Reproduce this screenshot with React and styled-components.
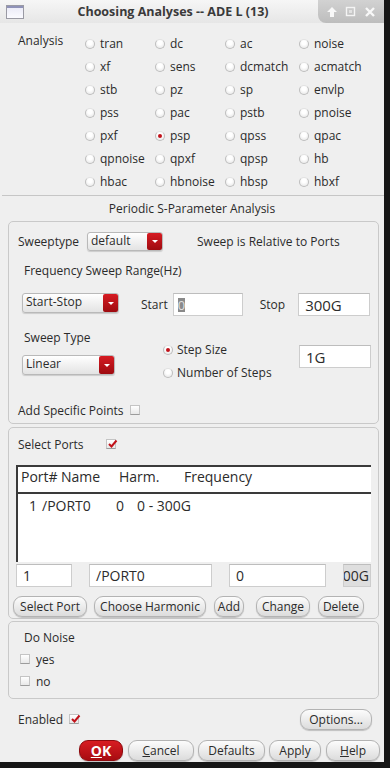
import React from "react";
import styled, { createGlobalStyle } from "styled-components";

const GlobalStyle = createGlobalStyle`
  html, body {
    margin: 0;
    padding: 0;
    background: #161616;
  }
  body {
    font-family: "Open Sans", "Noto Sans", sans-serif;
    font-size: 12px;
    color: #2b2b2b;
  }
`;

// window frame
const Window = styled.div`
  width: 384px;
  height: 762px;
  background: #efefef;
  display: flex;
  flex-direction: column;
  overflow: hidden;
`;

const TitleBar = styled.div`
  height: 23px;
  display: flex;
  align-items: center;
  background: linear-gradient(#f6f6f6, #e6e6e6);
  flex-shrink: 0;
`;

const WinIcon = styled.div`
  width: 16px;
  height: 12px;
  margin-left: 6px;
  border: 1px solid #9a9aa4;
  background: linear-gradient(#e9e9f6, #fbfbff);
  box-shadow: inset 0 2px 0 #8f92b8;
`;

const TitleText = styled.div`
  flex: 1;
  text-align: center;
  font-weight: bold;
  font-size: 12.5px;
  color: #3a3a3a;
  padding-left: 4px;
`;

const TitleButtons = styled.div`
  width: 66px;
  height: 23px;
  display: flex;
  align-items: center;
  justify-content: space-around;
  padding: 0 4px;
  box-sizing: border-box;
  background: linear-gradient(#d2d2d2, #bdbdbd);
  border-bottom-left-radius: 8px;
`;

// analysis grid
const AnalysisSection = styled.div`
  display: flex;
  padding: 9px 0 0 18px;
`;

const SideLabel = styled.div`
  width: ${(p) => p.w || 67}px;
  height: ${(p) => p.h || 23}px;
  line-height: ${(p) => (p.h ? p.h + 1 : 18)}px;
  flex-shrink: 0;
`;

const RadioGrid = styled.div`
  display: grid;
  grid-template-columns: 70px 70px 74px 70px;
  grid-auto-rows: 23px;
`;

const Option = styled.label`
  display: flex;
  align-items: center;
  gap: 5px;
  white-space: nowrap;
  font-size: 12px;
`;

const RadioDot = styled.span`
  width: 10px;
  height: 10px;
  border-radius: 50%;
  flex-shrink: 0;
  box-sizing: border-box;
  border: 1px solid #bdbdbd;
  border-top-color: #e3e3e3;
  background: radial-gradient(circle at 50% 35%, #ffffff 30%, #e2e2e2 100%);
  position: relative;
  &::after {
    content: "";
    display: ${(p) => (p.checked ? "block" : "none")};
    position: absolute;
    left: 2px;
    top: 2px;
    width: 4px;
    height: 4px;
    border-radius: 50%;
    background: #c1121a;
  }
`;

const Separator = styled.div`
  height: 1px;
  background: #c6c6c6;
  margin: 2px 0 0 2px;
`;

const Heading = styled.div`
  height: 25px;
  line-height: 26px;
  text-align: center;
  font-size: 12px;
`;

const Frame = styled.div`
  margin-left: 8px;
  width: 371px;
  height: ${(p) => p.h}px;
  margin-top: ${(p) => p.mt || 0}px;
  box-sizing: border-box;
  border: 1px solid #c9c9c9;
  border-radius: 5px;
  padding: ${(p) => p.pt || 0}px 0 0 ${(p) => (p.pl === undefined ? 9 : p.pl)}px;
  flex-shrink: 0;
`;

const Row = styled.div`
  display: flex;
  align-items: center;
  height: ${(p) => p.h || 18}px;
  margin-top: ${(p) => p.mt || 0}px;
  padding-left: ${(p) => p.pl || 0}px;
`;

const Text = styled.span`
  margin-left: ${(p) => p.ml || 0}px;
  margin-top: ${(p) => p.mt || 0}px;
  font-size: ${(p) => p.size || 12}px;
  white-space: nowrap;
`;

const Select = styled.div`
  width: ${(p) => p.w}px;
  height: ${(p) => p.h || 19}px;
  margin-left: ${(p) => p.ml || 0}px;
  box-sizing: border-box;
  display: flex;
  align-items: stretch;
  border: 1px solid #b9b9b9;
  border-radius: 3px;
  background: linear-gradient(#ffffff, #e3e3e3);
  box-shadow: 0 1px 1px rgba(0, 0, 0, 0.15);
  flex-shrink: 0;
`;

const SelectValue = styled.span`
  flex: 1;
  padding-left: 3px;
  font-size: 12px;
  line-height: 16px;
  white-space: nowrap;
`;

const SelectArrow = styled.span`
  width: 15px;
  border-radius: 2px;
  background: linear-gradient(#d61b22, #9e0b10);
  display: flex;
  align-items: center;
  justify-content: center;
  &::after {
    content: "";
    border-left: 3px solid transparent;
    border-right: 3px solid transparent;
    border-top: 3px solid #ffffff;
  }
`;

const Field = styled.div`
  width: ${(p) => p.w}px;
  height: ${(p) => p.h || 23}px;
  margin-left: ${(p) => p.ml || 0}px;
  margin-top: ${(p) => p.mt || 0}px;
  box-sizing: border-box;
  border: 1px solid #cdcdcd;
  border-top-color: #bdbdbd;
  background: ${(p) => (p.disabled ? "#dedede" : "#ffffff")};
  display: flex;
  align-items: center;
  justify-content: ${(p) => (p.clip ? "flex-end" : "flex-start")};
  padding: 0 ${(p) => (p.clip ? 1 : 6)}px;
  overflow: hidden;
  font-size: ${(p) => p.size || 14}px;
  white-space: nowrap;
  flex-shrink: 0;
`;

const Caret = styled.span`
  display: inline-block;
  width: 7px;
  height: 14px;
  margin-left: -2px;
  background: #8a8a8a;
  color: #e0e0e0;
  font-size: 13px;
  line-height: 14px;
  text-align: center;
`;

const SweepBlock = styled.div`
  display: flex;
  align-items: flex-start;
  margin-top: 12px;
  height: 56px;
`;

const Column = styled.div`
  display: flex;
  flex-direction: column;
  padding-top: ${(p) => p.pt || 0}px;
  margin-left: ${(p) => p.ml || 0}px;
  width: ${(p) => (p.w ? `${p.w}px` : "auto")};
`;

const RadioRow = styled.label`
  display: flex;
  align-items: center;
  gap: 4px;
  height: 23px;
  font-size: 12px;
  white-space: nowrap;
`;

const Check = styled.span`
  width: 10px;
  height: 10px;
  margin-left: ${(p) => p.ml || 0}px;
  box-sizing: border-box;
  border: 1px solid #c4c4c4;
  border-bottom-color: #9c9c9c;
  background: linear-gradient(#ffffff, #e8e8e8);
  display: inline-flex;
  align-items: center;
  justify-content: center;
  flex-shrink: 0;
  position: relative;
  svg {
    position: absolute;
    left: 0;
    top: -2px;
  }
`;

// port table
const Table = styled.div`
  width: 355px;
  height: 97px;
  margin: 12px 0 0 7px;
  box-sizing: border-box;
  background: #ffffff;
  border-left: 2px solid #3a3a3a;
  border-top: 2px solid #3a3a3a;
`;

const TableHead = styled.div`
  height: 25px;
  display: flex;
  align-items: flex-start;
  border-bottom: 2px solid #3a3a3a;
  font-size: 14px;
  line-height: 19px;
  padding-left: 3px;
`;

const TableRow = styled.div`
  height: 22px;
  display: flex;
  align-items: center;
  font-size: 14px;
  padding-left: 3px;
`;

const Cell = styled.span`
  width: ${(p) => p.w}px;
  padding-left: ${(p) => p.pl || 0}px;
  flex-shrink: 0;
  white-space: nowrap;
`;

const Button = styled.button`
  width: ${(p) => p.w}px;
  height: ${(p) => p.h || 21}px;
  margin-left: ${(p) => p.ml || 0}px;
  padding: 0;
  box-sizing: border-box;
  border: 1px solid ${(p) => (p.primary ? "#8e0a0e" : "#b3b3b3")};
  border-radius: 9px;
  background: ${(p) =>
    p.primary
      ? "linear-gradient(#d81c22, #a70c11)"
      : "linear-gradient(#fcfcfc, #dcdcdc)"};
  box-shadow: 0 1px 1px rgba(0, 0, 0, 0.2);
  color: ${(p) => (p.primary ? "#ffffff" : "#2b2b2b")};
  font-family: "Open Sans", "Noto Sans", sans-serif;
  font-size: ${(p) => (p.primary ? 14 : 12)}px;
  font-weight: ${(p) => (p.primary ? "bold" : "normal")};
  white-space: nowrap;
  flex-shrink: 0;
  u {
    text-decoration: underline;
  }
`;

const FooterRow = styled.div`
  display: flex;
  align-items: center;
  height: ${(p) => p.h}px;
  margin-top: ${(p) => p.mt}px;
  padding-left: ${(p) => p.pl}px;
`;

const CheckMark = () => (
  <svg width="11" height="11" viewBox="0 0 11 11">
    <path d="M2 6 L4.5 8.5 L9.5 2.5" fill="none" stroke="#c1121a" strokeWidth="2" />
  </svg>
);

const analyses = [
  ["tran", "dc", "ac", "noise"],
  ["xf", "sens", "dcmatch", "acmatch"],
  ["stb", "pz", "sp", "envlp"],
  ["pss", "pac", "pstb", "pnoise"],
  ["pxf", "psp", "qpss", "qpac"],
  ["qpnoise", "qpxf", "qpsp", "hb"],
  ["hbac", "hbnoise", "hbsp", "hbxf"],
];

export default function App() {
  return (
    <>
      <GlobalStyle />
      <Window>
        <TitleBar>
          <WinIcon />
          <TitleText>Choosing Analyses -- ADE L (13)</TitleText>
          <TitleButtons>
            <svg width="12" height="12" viewBox="0 0 12 12">
              <path d="M6 1 L11 6 H8 V11 H4 V6 H1 Z" fill="#f8f8f8" />
            </svg>
            <svg width="11" height="11" viewBox="0 0 11 11">
              <rect x="1.5" y="1.5" width="8" height="8" fill="none" stroke="#f4f4f4" strokeWidth="1.4" />
              <rect x="4" y="4" width="3" height="3" fill="#e2e2e2" />
            </svg>
            <svg width="12" height="12" viewBox="0 0 12 12">
              <path d="M2 2 L10 10 M10 2 L2 10" stroke="#f8f8f8" strokeWidth="2.4" />
            </svg>
          </TitleButtons>
        </TitleBar>

        <AnalysisSection>
          <SideLabel>Analysis</SideLabel>
          <RadioGrid>
            {analyses.flat().map((name) => (
              <Option key={name}>
                <RadioDot checked={name === "psp"} />
                {name}
              </Option>
            ))}
          </RadioGrid>
        </AnalysisSection>

        <Separator />
        <Heading>Periodic S-Parameter Analysis</Heading>

        <Frame h={203} pt={10}>
          <Row h={19}>
            <SideLabel w={69} h={19}>
              Sweeptype
            </SideLabel>
            <Select w={76}>
              <SelectValue>default</SelectValue>
              <SelectArrow />
            </Select>
            <Text ml={34}>Sweep is Relative to Ports</Text>
          </Row>
          <Row mt={10} pl={6}>
            Frequency Sweep Range(Hz)
          </Row>
          <Row h={26} mt={11} pl={4}>
            <Select w={97} h={20}>
              <SelectValue>Start-Stop</SelectValue>
              <SelectArrow />
            </Select>
            <Text ml={22} mt={2}>Start</Text>
            <Field w={70} ml={5} mt={3}>
              <Caret>0</Caret>
            </Field>
            <Text ml={17} mt={3}>
              Stop
            </Text>
            <Field w={72} ml={13} mt={3} size={15}>
              300G
            </Field>
          </Row>
          <SweepBlock>
            <Column w={106}>
              <Row pl={6}>Sweep Type</Row>
              <Row h={20} mt={9} pl={4}>
                <Select w={93} h={20}>
                  <SelectValue>Linear</SelectValue>
                  <SelectArrow />
                </Select>
              </Row>
            </Column>
            <Column ml={39} pt={10} w={136}>
              <RadioRow>
                <RadioDot checked />
                Step Size
              </RadioRow>
              <RadioRow>
                <RadioDot />
                Number of Steps
              </RadioRow>
            </Column>
            <Column pt={17}>
              <Field w={72} size={15}>
                1G
              </Field>
            </Column>
          </SweepBlock>
          <Row mt={17}>
            Add Specific Points
            <Check ml={6} />
          </Row>
        </Frame>

        <Frame h={192} mt={3} pt={7} pl={0}>
          <Row pl={9}>
            Select Ports
            <Check ml={22}>
              <CheckMark />
            </Check>
          </Row>
          <Table>
            <TableHead>
              <Cell w={40}>Port#</Cell>
              <Cell w={58}>Name</Cell>
              <Cell w={65}>Harm.</Cell>
              <Cell w={80}>Frequency</Cell>
            </TableHead>
            <TableRow>
              <Cell w={13} pl={8}>1</Cell>
              <Cell w={74}>/PORT0</Cell>
              <Cell w={21}>0</Cell>
              <Cell w={80}>0 - 300G</Cell>
            </TableRow>
          </Table>
          <Row h={23} mt={2} pl={7}>
            <Field w={56}>1</Field>
            <Field w={123} ml={17}>/PORT0</Field>
            <Field w={97} ml={17}>0</Field>
            <Field w={28} ml={17} disabled clip>
              300G
            </Field>
          </Row>
          <Row h={21} mt={9} pl={4}>
            <Button w={74}>Select Port</Button>
            <Button w={112} ml={7}>Choose Harmonic</Button>
            <Button w={30} ml={8}>Add</Button>
            <Button w={54} ml={12}>Change</Button>
            <Button w={46} ml={8}>Delete</Button>
          </Row>
        </Frame>

        <Frame h={78} mt={2} pt={6}>
          <Row pl={6}>Do Noise</Row>
          <Row h={22} mt={2} pl={2}>
            <Check />
            <Text ml={6}>yes</Text>
          </Row>
          <Row h={22} pl={2}>
            <Check />
            <Text ml={6}>no</Text>
          </Row>
        </Frame>

        <FooterRow h={22} mt={9} pl={18}>
          Enabled
          <Check ml={6}>
            <CheckMark />
          </Check>
          <Button w={72} ml={221}>Options...</Button>
        </FooterRow>

        <FooterRow h={21} mt={10} pl={79}>
          <Button w={44} primary>
            <u>O</u>K
          </Button>
          <Button w={66} ml={5}>
            <u>C</u>ancel
          </Button>
          <Button w={67} ml={4}>Defaults</Button>
          <Button w={52} ml={4}>Apply</Button>
          <Button w={54} ml={5}>
            <u>H</u>elp
          </Button>
        </FooterRow>
      </Window>
    </>
  );
}
